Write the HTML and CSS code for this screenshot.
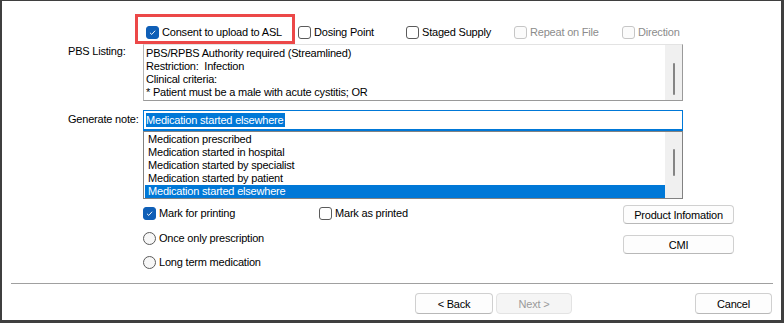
FILE: index.html
```html
<!DOCTYPE html>
<html lang="en">
<head>
    <meta charset="UTF-8">
    <title>Prescription options</title>
    <link rel="stylesheet" href="styles.css">
</head>
<body>
    <div class="window">
        <div class="opts">
            <label class="opt wide"><span class="box checked"><svg viewBox="0 0 13 13"><path d="M3.5 6.8 L5.6 8.8 L9.6 4.4" /></svg></span>Consent to upload to ASL</label>
            <label class="opt"><span class="box"></span>Dosing Point</label>
            <label class="opt"><span class="box"></span>Staged Supply</label>
            <label class="opt off"><span class="box"></span>Repeat on File</label>
            <label class="opt off"><span class="box"></span>Direction</label>
            <div class="marker"></div>
        </div>

        <div class="field pbs">
            <span class="label">PBS Listing:</span>
            <div class="memo">
                <div class="lines">
                    <div>PBS/RPBS Authority required (Streamlined)</div>
                    <div>Restriction:&nbsp; Infection</div>
                    <div>Clinical criteria:</div>
                    <div>* Patient must be a male with acute cystitis; OR</div>
                </div>
                <div class="scroll"><span class="thumb"></span></div>
            </div>
        </div>

        <div class="field note">
            <span class="label">Generate note:</span>
            <div class="combo">
                <div class="input"><span class="sel">Medication started elsewhere</span></div>
                <div class="list">
                    <div class="items">
                        <div>Medication prescribed</div>
                        <div>Medication started in hospital</div>
                        <div>Medication started by specialist</div>
                        <div>Medication started by patient</div>
                        <div class="on">Medication started elsewhere</div>
                    </div>
                    <div class="scroll"><span class="thumb"></span></div>
                </div>
            </div>
        </div>

        <div class="lower">
            <div class="checks">
                <div class="row">
                    <label class="opt print"><span class="box checked"><svg viewBox="0 0 13 13"><path d="M3.5 6.8 L5.6 8.8 L9.6 4.4" /></svg></span>Mark for printing</label>
                    <label class="opt"><span class="box"></span>Mark as printed</label>
                </div>
                <div class="row">
                    <label class="opt"><span class="radio"></span>Once only prescription</label>
                </div>
                <div class="row">
                    <label class="opt"><span class="radio"></span>Long term medication</label>
                </div>
            </div>
            <div class="side">
                <button class="btn">Product Infomation</button>
                <button class="btn">CMI</button>
            </div>
        </div>

        <div class="sep"></div>

        <div class="footer">
            <button class="btn nav">&lt; Back</button>
            <button class="btn nav next" disabled>Next &gt;</button>
            <button class="btn nav cancel">Cancel</button>
        </div>
    </div>
</body>
</html>
```

FILE: styles.css
```css
* {
    margin: 0;
    padding: 0;
    box-sizing: border-box;
}

body {
    font-family: "Liberation Sans", Arial, sans-serif;
    font-size: 11px;
    letter-spacing: -0.2px;
    color: #000000;
    background: #ffffff;
}

.window {
    position: relative;
    width: 784px;
    height: 323px;
    background: #ffffff;
    border-style: solid;
    border-color: #3f3f3f;
    border-width: 1px 3px 3px 2px;
}

/* checkboxes */
.opts {
    display: flex;
    margin-top: 24px;
    margin-left: 144px;
    height: 14px;
    align-items: center;
}

.opt {
    display: flex;
    align-items: center;
    width: 108px;
    white-space: nowrap;
    line-height: 14px;
}

.opt.wide {
    width: 152px;
}

.opt.off {
    color: #8c8c8c;
}

.box {
    width: 13px;
    height: 13px;
    margin-right: 3px;
    border: 1px solid #5b5b5b;
    border-radius: 3px;
    background: #ffffff;
    flex: none;
}

.box svg {
    display: block;
    width: 11px;
    height: 11px;
}

.box svg path {
    fill: none;
    stroke: #ffffff;
    stroke-width: 1.1;
}

.box.checked {
    background: #0f5fb7;
    border-color: #0f5fb7;
}

.opt.off .box {
    border-color: #c6c6c6;
    background: #fbfbfb;
}

.radio {
    width: 13px;
    height: 13px;
    margin-right: 3px;
    border: 1px solid #5b5b5b;
    border-radius: 50%;
    background: #f7f7f7;
    flex: none;
}

.marker {
    position: absolute;
    left: 133px;
    top: 13px;
    width: 160px;
    height: 30px;
    border: 3px solid #ec4848;
}

/* fields */
.field {
    display: flex;
    align-items: flex-start;
}

.label {
    width: 141px;
    padding-left: 66px;
    white-space: nowrap;
}

.pbs {
    margin-top: 5px;
}

.pbs .label {
    padding-top: 1px;
}

.memo {
    display: flex;
    width: 540px;
    height: 57px;
    border: 1px solid #9a9a9a;
    border-top-color: #e3e3e3;
    border-left-color: #b4b4b4;
}

.lines {
    flex: 1;
    padding: 2px 0 0 2px;
    line-height: 13px;
    overflow: hidden;
}

.scroll {
    width: 17px;
    background: #f0f0f0;
    display: flex;
    justify-content: center;
    flex: none;
}

.thumb {
    display: block;
    width: 2px;
    background: #858585;
    border-radius: 1px;
}

.memo .thumb {
    margin-top: 18px;
    height: 32px;
}

.note {
    margin-top: 9px;
}

.note .label {
    padding-top: 3px;
}

.combo {
    width: 540px;
}

.input {
    height: 21px;
    border: 1px solid #0078d7;
    border-bottom-width: 2px;
    padding: 2px 0 0 2px;
}

.sel {
    display: inline-block;
    background: #0078d7;
    color: #ffffff;
    line-height: 14px;
    padding-right: 2px;
}

.list {
    display: flex;
    height: 68px;
    border: 1px solid #828282;
}

.items {
    flex: 1;
    padding: 1px 0 0 1px;
    line-height: 13px;
}

.items div {
    padding-left: 3px;
}

.items .on {
    background: #0078d7;
    color: #ffffff;
}

.list .thumb {
    margin-top: 17px;
    height: 27px;
}

/* lower part */
.lower {
    display: flex;
    height: 78px;
    margin-top: 6px;
    margin-left: 141px;
}

.checks {
    width: 480px;
}

.row {
    display: flex;
    height: 16px;
    align-items: center;
    margin-bottom: 8px;
}

.row:first-child {
    margin-top: 0;
    margin-bottom: 9px;
}

.opt.print {
    width: 176px;
}

.row .opt {
    width: auto;
}

.row .opt.print {
    width: 176px;
}

.side {
    display: flex;
    flex-direction: column;
    gap: 11px;
}

.btn {
    font-family: inherit;
    font-size: 11px;
    letter-spacing: -0.2px;
    color: #000000;
    background: #fdfdfd;
    border: 1px solid #d0d0d0;
    border-bottom-color: #b8b8b8;
    border-radius: 4px;
    width: 111px;
    height: 19px;
    line-height: 16px;
}

.sep {
    margin: 0 8px 0 9px;
    border-top: 1px solid #a0a0a0;
}

.footer {
    display: flex;
    margin-top: 9px;
    margin-left: 413px;
    margin-right: 9px;
}

.btn.nav {
    height: 21px;
    width: 78px;
}

.btn.next {
    width: 76px;
    margin-left: 3px;
    color: #9a9a9a;
    background: #f5f5f5;
    border-color: #e3e3e3;
}

.btn.cancel {
    width: 77px;
    margin-left: auto;
}
```
